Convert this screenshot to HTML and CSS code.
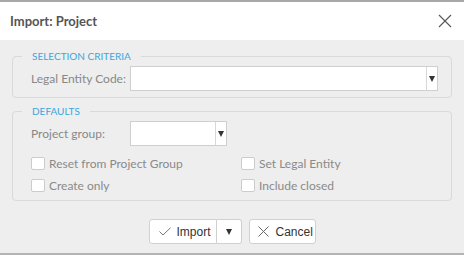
FILE: index.html
```html
<!DOCTYPE html>
<html lang="en">
<head>
    <meta charset="UTF-8">
    <title>Import: Project</title>
    <link rel="stylesheet" href="styles.css">
</head>
<body>
    <div class="dialog">
        <div class="dialog-header">
            <span class="dialog-title">Import: Project</span>
            <button class="close-button" title="Close">
                <svg width="14" height="14" viewBox="0 0 14 14"><path d="M1 1 L13 13 M13 1 L1 13" stroke="#555" stroke-width="1.1" fill="none"/></svg>
            </button>
        </div>

        <div class="dialog-body">
            <fieldset class="group">
                <legend>Selection Criteria</legend>
                <div class="field-row">
                    <label class="field-label">Legal Entity Code:</label>
                    <div class="combo combo-wide">
                        <span class="combo-text"></span>
                        <span class="combo-button"><span class="arrow"></span></span>
                    </div>
                </div>
            </fieldset>

            <fieldset class="group group-defaults">
                <legend>Defaults</legend>
                <div class="field-row">
                    <label class="field-label">Project group:</label>
                    <div class="combo combo-small">
                        <span class="combo-text"></span>
                        <span class="combo-button"><span class="arrow"></span></span>
                    </div>
                </div>
                <div class="check-grid">
                    <label class="check"><span class="box"></span>Reset from Project Group</label>
                    <label class="check"><span class="box"></span>Set Legal Entity</label>
                    <label class="check"><span class="box"></span>Create only</label>
                    <label class="check"><span class="box"></span>Include closed</label>
                </div>
            </fieldset>
        </div>

        <div class="dialog-footer">
            <div class="split-button">
                <button class="btn btn-main">
                    <svg width="12" height="10" viewBox="0 0 12 10"><path d="M0.5 4.5 L4 8 L11.5 0.8" stroke="#777" stroke-width="1" fill="none"/></svg>
                    Import
                </button>
                <button class="btn btn-drop"><span class="arrow"></span></button>
            </div>
            <button class="btn btn-cancel">
                <svg width="11" height="11" viewBox="0 0 11 11"><path d="M0.5 0.5 L10.5 10.5 M10.5 0.5 L0.5 10.5" stroke="#666" stroke-width="1" fill="none"/></svg>
                Cancel
            </button>
        </div>
    </div>
</body>
</html>
```

FILE: styles.css
```css
/* Basic Reset */
* {
    margin: 0;
    padding: 0;
    box-sizing: border-box;
}

body {
    font-family: 'Lato', 'Open Sans', sans-serif;
    background: #eeeeee;
}

/* Dialog frame */
.dialog {
    height: 255px;
    border-top: 2px solid #a8a8a8;
    border-bottom: 2px solid #b4b4b4;
    display: flex;
    flex-direction: column;
}

.dialog-header {
    height: 38px;
    background: #fff;
    display: flex;
    align-items: center;
    justify-content: space-between;
    padding: 0 12px 0 10px;
}

.dialog-title {
    font-size: 13px;
    font-weight: bold;
    color: #555;
}

.close-button {
    border: none;
    background: none;
    width: 14px;
    height: 14px;
    display: flex;
    cursor: pointer;
}

/* Body */
.dialog-body {
    padding: 10px 12px 0 12px;
}

.group {
    border: 1px solid #d9d9d9;
    border-radius: 4px;
    padding: 4px 13px 6px 18px;
}

.group legend {
    font-size: 10px;
    line-height: 12px;
    color: #3aa6dc;
    text-transform: uppercase;
    padding: 0 10px;
    margin-left: -9px;
}

.group-defaults {
    margin-top: 7px;
    padding-top: 4px;
    padding-bottom: 4px;
}

.field-row {
    display: flex;
    align-items: center;
    height: 25px;
}

.field-label {
    width: 99px;
    font-size: 12px;
    color: #888;
}

/* Combo box */
.combo {
    height: 25px;
    display: flex;
    background: #fff;
    border: 1px solid #cfcfcf;
}

.combo-wide {
    flex: 1;
}

.combo-small {
    width: 97px;
}

.combo-text {
    flex: 1;
}

.combo-button {
    width: 11px;
    border-left: 1px solid #d8d8d8;
    display: flex;
    align-items: center;
    justify-content: center;
}

.arrow {
    width: 0;
    height: 0;
    border-left: 3.5px solid transparent;
    border-right: 3.5px solid transparent;
    border-top: 6px solid #333;
}

/* Checkboxes */
.check-grid {
    display: grid;
    grid-template-columns: 210px 1fr;
    grid-auto-rows: 22px;
    margin-top: 6px;
}

.check {
    display: flex;
    align-items: center;
    font-size: 12px;
    color: #8a8a8a;
}

.check .box {
    width: 14px;
    height: 13px;
    background: #fff;
    border: 1px solid #cccccc;
    border-radius: 2px;
    margin-right: 4px;
}

/* Footer */
.dialog-footer {
    flex: 1;
    display: flex;
    justify-content: center;
    align-items: flex-start;
    gap: 7px;
    padding-top: 18px;
}

.btn {
    height: 25px;
    background: #fff;
    border: 1px solid #d0d0d0;
    font-family: 'Liberation Sans', Arial, sans-serif;
    font-size: 12px;
    color: #333;
    display: flex;
    align-items: center;
    cursor: pointer;
}

.split-button {
    display: flex;
}

.btn-main {
    width: 68px;
    border-radius: 3px 0 0 3px;
    padding-left: 9px;
    gap: 6px;
}

.btn-drop {
    width: 25px;
    border-left: none;
    border-radius: 0 3px 3px 0;
    justify-content: center;
}

.btn-cancel {
    width: 67px;
    border-radius: 3px;
    padding-left: 8px;
    gap: 7px;
}
```
